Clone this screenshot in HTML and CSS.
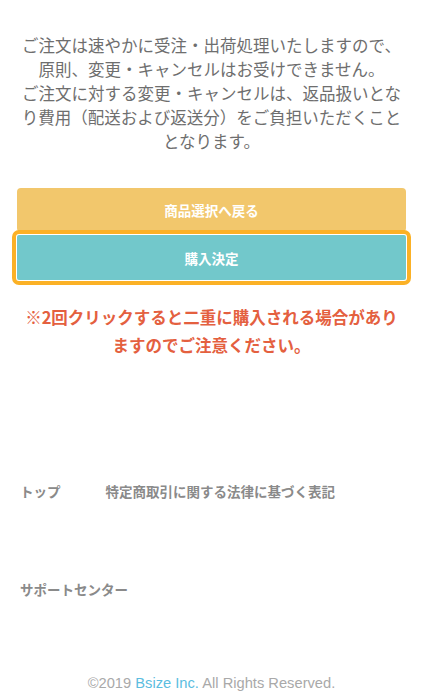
FILE: index.html
```html
<!DOCTYPE html>
<html lang="ja">
<head>
<meta charset="utf-8">
<title>購入確認</title>
<link rel="stylesheet" href="styles.css">
</head>
<body>
<div class="page">
  <p class="notice">ご注文は速やかに受注・出荷処理いたしますので、<br>原則、変更・キャンセルはお受けできません。<br>ご注文に対する変更・キャンセルは、返品扱いとな<br>り費用（配送および返送分）をご負担いただくこと<br>となります。</p>

  <div class="actions">
    <a class="btn btn-back" href="#">商品選択へ戻る</a>
    <a class="btn btn-buy" href="#">購入決定</a>
  </div>

  <p class="warning">※2回クリックすると二重に購入される場合があり<br>ますのでご注意ください。</p>

  <ul class="footer-nav">
    <li><a href="#">トップ</a></li>
    <li><a href="#">特定商取引に関する法律に基づく表記</a></li>
    <li><a href="#">サポートセンター</a></li>
  </ul>

  <p class="copyright">©2019 <span class="brand">Bsize Inc.</span> All Rights Reserved.</p>
</div>
</body>
</html>
```

FILE: styles.css
```css
html, body {
  margin: 0;
  padding: 0;
  background: #ffffff;
}

body {
  font-family: "Noto Sans CJK JP", "Noto Sans", sans-serif;
}

.page {
  width: 389px;
  margin-left: 17px;
}

.notice {
  margin: 33px 0 0;
  font-size: 16.5px;
  line-height: 24px;
  color: #6e6e6e;
  text-align: center;
}

.actions {
  margin-top: 35px;
  display: flex;
  flex-direction: column;
  gap: 3px;
}

.btn {
  display: flex;
  align-items: center;
  justify-content: center;
  color: #ffffff;
  font-size: 13.5px;
  font-weight: 700;
  text-decoration: none;
  border-radius: 4px;
}

.btn-back {
  height: 44px;
  background: #f2c76c;
}

.btn-buy {
  height: 45px;
  background: #72c8cb;
  outline: 4px solid #fbb126;
  outline-offset: 1px;
  border-radius: 2px;
}

.warning {
  margin: 23px 0 0;
  font-size: 16.5px;
  line-height: 28px;
  font-weight: 700;
  color: #e4603f;
  text-align: center;
}

.footer-nav {
  list-style: none;
  margin: 122px 0 0;
  padding: 0 0 0 3px;
  display: flex;
  flex-wrap: wrap;
  column-gap: 45px;
  row-gap: 78px;
}

.footer-nav li {
  font-size: 13.5px;
  line-height: 20px;
  font-weight: 700;
}

.footer-nav a {
  color: #8a8a8a;
  text-decoration: none;
}

.copyright {
  margin: 74px 0 0;
  font-family: "Liberation Sans", Arial, sans-serif;
  font-size: 14.7px;
  line-height: 20px;
  color: #a9a9a9;
  text-align: center;
}

.brand {
  color: #5bbde0;
}
```
